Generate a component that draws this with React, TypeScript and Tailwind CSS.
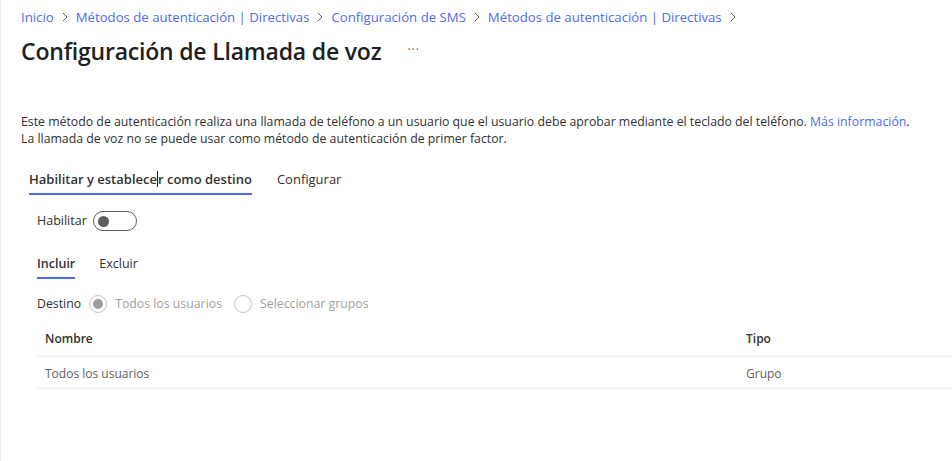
import React from 'react';

const font = { fontFamily: '"Open Sans", "Noto Sans", sans-serif' };

const crumbs = [
  'Inicio',
  'Métodos de autenticación | Directivas',
  'Configuración de SMS',
  'Métodos de autenticación | Directivas',
];

const Chevron: React.FC = () => (
  <svg width="8" height="10" viewBox="0 0 8 10" className="mx-[7px] shrink-0">
    <path d="M2 1l4 4-4 4" fill="none" stroke="#605e5c" strokeWidth="1" />
  </svg>
);

const Radio: React.FC<{ checked?: boolean }> = ({ checked }) => (
  <span className="w-[18px] h-[18px] rounded-full border border-[#c8c6c4] flex items-center justify-center shrink-0">
    {checked && <span className="w-[10px] h-[10px] rounded-full bg-[#a19f9d]" />}
  </span>
);

const App: React.FC = () => {
  return (
    <div className="w-[952px] h-[461px] bg-white border-l border-[#edebe9] text-[#323130] overflow-hidden" style={font}>
      <div className="pl-[20px] pt-[7px]">
        {/* breadcrumb */}
        <nav className="flex items-center text-[13.2px] leading-[20px] text-[#4f6bed]">
          {crumbs.map((c, i) => (
            <React.Fragment key={i}>
              <span>{c}</span>
              <Chevron />
            </React.Fragment>
          ))}
        </nav>

        <div className="flex items-center mt-[7px] h-[34px]">
          <h1 className="text-[23px] font-semibold text-[#201f1e] tracking-[-0.2px]">Configuración de Llamada de voz</h1>
          <span className="ml-[26px] text-[12px] text-[#605e5c] tracking-[1px] -mt-[3px]">···</span>
        </div>

        <div className="mt-[45px] text-[12.3px] leading-[17px]">
          <p>
            Este método de autenticación realiza una llamada de teléfono a un usuario que el usuario debe aprobar mediante el teclado del teléfono.{' '}
            <span className="text-[#4f6bed]">Más información</span>.
          </p>
          <p>La llamada de voz no se puede usar como método de autenticación de primer factor.</p>
        </div>

        {/* main tabs */}
        <div className="flex items-end mt-[21px] ml-[8px] gap-[25px] text-[13px]">
          <div className="flex flex-col">
            <span className="font-semibold leading-[22px] pb-[3px] flex items-center">
              Habilitar y establece
              <span className="inline-block w-px h-[16px] bg-[#201f1e]" />
              r como destino
            </span>
            <span className="h-[2px] bg-[#4f6bed]" />
          </div>
          <span className="leading-[22px] pb-[5px]">Configurar</span>
        </div>

        <div className="ml-[16px]">
          <div className="flex items-center mt-[16px] text-[12.5px] gap-[6px]">
            <span>Habilitar</span>
            <span className="w-[44px] h-[20px] rounded-full border border-[#605e5c] flex items-center pl-[4px]">
              <span className="w-[11px] h-[11px] rounded-full bg-[#605e5c]" />
            </span>
          </div>

          {/* include / exclude */}
          <div className="flex items-end mt-[23px] gap-[24px] text-[12.5px]">
            <div className="flex flex-col">
              <span className="font-semibold leading-[20px] pb-[3px]">Incluir</span>
              <span className="h-[2px] bg-[#4f6bed]" />
            </div>
            <span className="leading-[20px] pb-[5px]">Excluir</span>
          </div>

          <div className="flex items-center mt-[15px] text-[12.3px] h-[20px]">
            <span className="mr-[8px]">Destino</span>
            <Radio checked />
            <span className="ml-[8px] mr-[12px] text-[#a19f9d]">Todos los usuarios</span>
            <Radio />
            <span className="ml-[8px] text-[#a19f9d]">Seleccionar grupos</span>
          </div>

          {/* table */}
          <div className="mt-[7px] text-[12px]">
            <div className="grid grid-cols-[709px_1fr] h-[36px] items-center border-b border-[#edebe9] font-semibold">
              <span className="pl-[8px]">Nombre</span>
              <span>Tipo</span>
            </div>
            <div className="grid grid-cols-[709px_1fr] h-[32px] pt-[3px] items-center border-b border-[#edebe9] text-[#605e5c]">
              <span className="pl-[8px]">Todos los usuarios</span>
              <span>Grupo</span>
            </div>
          </div>
        </div>
      </div>
    </div>
  );
};

export default App;
